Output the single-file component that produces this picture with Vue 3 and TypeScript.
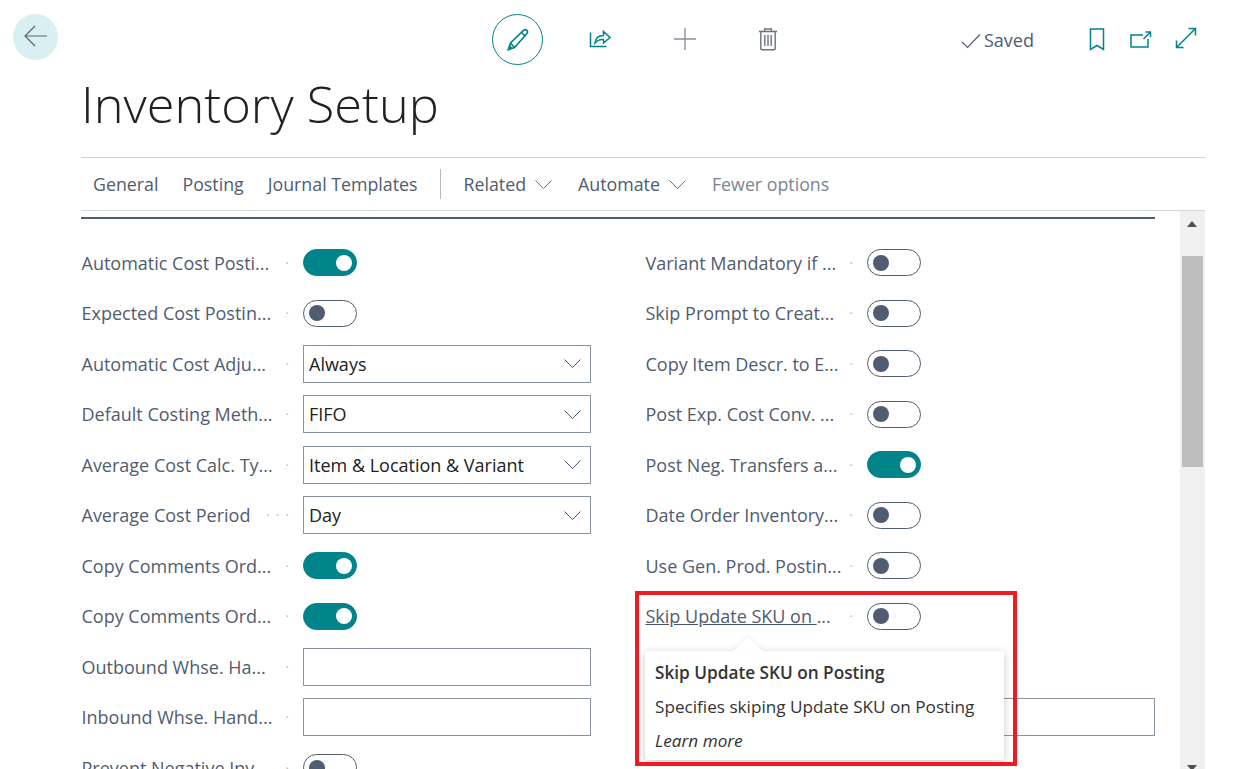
<script setup lang="ts">
type Field = { label: string; kind: 'on' | 'off' | 'select' | 'input' | 'blank'; value?: string; dots?: boolean; link?: boolean }

const left: Field[] = [
  { label: 'Automatic Cost Posti...', kind: 'on' },
  { label: 'Expected Cost Postin...', kind: 'off' },
  { label: 'Automatic Cost Adju...', kind: 'select', value: 'Always' },
  { label: 'Default Costing Meth...', kind: 'select', value: 'FIFO' },
  { label: 'Average Cost Calc. Ty...', kind: 'select', value: 'Item & Location & Variant' },
  { label: 'Average Cost Period', kind: 'select', value: 'Day', dots: true },
  { label: 'Copy Comments Ord...', kind: 'on' },
  { label: 'Copy Comments Ord...', kind: 'on' },
  { label: 'Outbound Whse. Ha...', kind: 'input' },
  { label: 'Inbound Whse. Hand...', kind: 'input' },
  { label: 'Prevent Negative Inv...', kind: 'off' },
]
const right: Field[] = [
  { label: 'Variant Mandatory if ...', kind: 'off' },
  { label: 'Skip Prompt to Creat...', kind: 'off' },
  { label: 'Copy Item Descr. to E...', kind: 'off' },
  { label: 'Post Exp. Cost Conv. ...', kind: 'off' },
  { label: 'Post Neg. Transfers a...', kind: 'on' },
  { label: 'Date Order Inventory...', kind: 'off' },
  { label: 'Use Gen. Prod. Postin...', kind: 'off' },
  { label: 'Skip Update SKU on ...', kind: 'off', link: true },
  { label: '', kind: 'blank' },
  { label: '', kind: 'select', value: '' },
]
const columns = [left, right]
</script>

<template>
  <div class="page">
    <header class="top">
      <button class="back" aria-label="Back">
        <svg width="26" height="22" viewBox="0 0 26 22" fill="none" stroke="#5f6368" stroke-width="1.2"><path d="M24 11H2M12 1 2 11l10 10" /></svg>
      </button>
      <div class="actions">
        <span class="edit">
          <svg width="24" height="24" viewBox="0 0 24 24" fill="none" stroke="#008489" stroke-width="1.6"><path d="M2.500 21.500 4.500 15 17.500 2.400c1-.9 2.400-.9 3.300 0 .9 1 .9 2.300 0 3.300L8.500 19.500zM4.500 15l4 4.500M15.500 4.500l4 4" /><path d="M2.500 21.500 3.500 18l2 2z" fill="#008489" /></svg>
        </span>
        <svg class="share" width="24" height="24" viewBox="0 0 24 24" fill="none" stroke="#008489" stroke-width="1.500"><path d="M2.500 6.500V20.500H18.500M7 17c.4-4.500 3.500-7.500 8.500-7.500V5.500l6.500 6-6.500 5.500v-3.500c-3.500-.2-6.500 1-8.500 3.500z" /></svg>
        <svg class="plus" width="24" height="24" viewBox="0 0 24 24" fill="none" stroke="#8b919c" stroke-width="1.400"><path d="M12 1v22M1 12h22" /></svg>
        <svg class="trash" width="22" height="24" viewBox="0 0 22 24" fill="none" stroke="#6b7280" stroke-width="1.400"><path d="M2 4.500h18M7.500 4.500V2h7v2.500M3.800 4.500v17.300c0 .6.400 1 1 1h12.400c.6 0 1-.4 1-1V4.500M7.800 8v11M11 8v11M14.200 8v11" /></svg>
      </div>
      <div class="saved">
        <svg width="20" height="16" viewBox="0 0 20 16" fill="none" stroke="#505c6f" stroke-width="1.200"><path d="M1 9l5.500 5.500L19 1.500" /></svg>
        <span>Saved</span>
      </div>
      <div class="tools">
        <svg width="16" height="23" viewBox="0 0 16 23" fill="none" stroke="#008489" stroke-width="1.500"><path d="M1.500 1h13v20.500L8 17.500l-6.500 4z" /></svg>
        <svg class="pop" width="22" height="17" viewBox="0 0 22 17" fill="none" stroke="#008489" stroke-width="1.500"><path d="M13 4H1v12h17V8M13.500 8 20 1.500M15.500 1H20.500V6" /></svg>
        <svg class="expand" width="22" height="22" viewBox="0 0 22 22" fill="none" stroke="#008489" stroke-width="1.500"><path d="M1.500 20.500l19-19M13.500 1.500h7v7M1.500 13.500v7h7" /></svg>
      </div>
    </header>

    <h1 class="title">Inventory Setup</h1>

    <nav class="menu">
      <span class="item general">General</span>
      <span class="item posting">Posting</span>
      <span class="item journal">Journal Templates</span>
      <span class="sep"></span>
      <span class="item related">Related
        <svg width="17" height="9" viewBox="0 0 17 9" fill="none" stroke="#6b7280" stroke-width="1"><path d="M.5.500l8 8 8-8" /></svg>
      </span>
      <span class="item automate">Automate
        <svg width="17" height="9" viewBox="0 0 17 9" fill="none" stroke="#6b7280" stroke-width="1"><path d="M.5.500l8 8 8-8" /></svg>
      </span>
      <span class="item fewer">Fewer options</span>
    </nav>

    <section class="panel">
      <div class="content">
        <div class="rule"></div>
        <div class="form">
          <div v-for="(col, c) in columns" :key="c" class="col">
            <div v-for="(f, i) in col" :key="i" class="row">
              <template v-if="f.kind !== 'blank'">
                <span class="label" :class="{ hidden: !f.label }">
                  <template v-if="f.link"><u>Skip Update SKU on </u>...</template>
                  <template v-else>{{ f.label }}</template>
                </span>
                <span class="dots" :class="{ hidden: !f.label, long: f.dots }">{{ f.dots ? '· · ·' : '·' }}</span>
                <span v-if="f.kind === 'on'" class="toggle on"><i></i></span>
                <span v-else-if="f.kind === 'off'" class="toggle"><i></i></span>
                <span v-else-if="f.kind === 'select'" class="box">
                  {{ f.value }}
                  <svg width="17" height="9" viewBox="0 0 17 9" fill="none" stroke="#44546a" stroke-width="1"><path d="M.5.500l8 8 8-8" /></svg>
                </span>
                <span v-else class="box"></span>
              </template>
            </div>
          </div>
        </div>
      </div>
      <div class="scroll">
        <span class="up"></span>
        <span class="thumb"></span>
        <span class="down"></span>
      </div>
    </section>

    <div class="tip">
      <span class="arrow"></span>
      <strong>Skip Update SKU on Posting</strong>
      <p>Specifies skiping Update SKU on Posting</p>
      <em>Learn more</em>
    </div>
    <div class="mark"></div>
  </div>
</template>

<style>
html, body { margin: 0; background: #fff; overflow: hidden; }
</style>

<style scoped>
.page {
  position: relative;
  width: 1243px;
  height: 769px;
  overflow: hidden;
  box-sizing: border-box;
  padding: 14px 38px 0 13px;
  font-family: "Open Sans", "Noto Sans", sans-serif;
  font-size: 18px;
  color: #212121;
}
.top { display: flex; align-items: flex-start; height: 52px; }
.back {
  width: 45px; height: 46px; border: 0; padding: 0 0 2px; border-radius: 50%;
  background: #d9f0f2; display: flex; align-items: center; justify-content: center;
}
.actions { display: flex; align-items: center; margin-left: 434px; height: 51px; }
.edit {
  width: 49px; height: 49px; border: 1px solid #008489; border-radius: 50%;
  display: flex; align-items: center; justify-content: center;
}
.share { margin: -3px 0 0 45px; }
.plus { margin: -2px 0 0 61px; }
.trash { margin: -2px 0 0 60px; }
.saved { display: flex; align-items: center; gap: 3px; margin-left: 182px; height: 51px; color: #505c6f; }
.saved svg { margin-top: 2px; }
.tools { display: flex; align-items: center; height: 51px; margin-left: 55px; }
.tools svg:first-child { margin-top: -1px; }
.pop { margin-left: 25px; margin-top: -1px; }
.expand { margin-left: 23px; margin-top: -3px; }
.title {
  margin: 3px 0 0 68px;
  font-size: 50.500px;
  line-height: 70px;
  font-weight: 300;
  color: #212121;
  border-bottom: 1px solid #d0d3d8;
  height: 70px;
  padding-bottom: 18px;
}
.menu {
  margin-left: 68px;
  height: 52px;
  display: flex;
  align-items: center;
  border-bottom: 1px solid #d8d8dc;
  color: #505c6f;
  font-size: 17.800px;
}
.item { display: flex; align-items: center; white-space: nowrap; }
.general { margin-left: 12px; }
.posting { margin-left: 24px; }
.journal { margin-left: 24px; }
.sep { width: 1px; height: 30px; background: #b5bac2; margin-left: 22px; }
.related { margin-left: 23px; gap: 9px; }
.automate { margin-left: 26px; gap: 9px; }
.fewer { margin-left: 26px; color: #7b8494; }
.panel { margin-left: 68px; height: 558px; display: flex; justify-content: space-between; overflow: hidden; }
.content { width: 1074px; overflow: hidden; }
.rule { height: 2px; margin-top: 6px; background: #505c6f; }
.form { display: grid; grid-template-columns: 510px 510px; column-gap: 54px; padding-top: 18.500px; }
.col { display: grid; grid-auto-rows: 50.500px; }
.row { display: flex; align-items: center; color: #505c6f; }
.label { width: 201px; white-space: nowrap; overflow: hidden; padding-left: .5px; box-sizing: border-box; }
.label u { text-decoration-color: #44546a; }
.dots { width: 24px; margin-left: -3px; padding-right: 14px; box-sizing: border-box; color: #b5bac2; font-size: 13px; text-align: right; white-space: nowrap; }
.dots.long { direction: rtl; word-spacing: 3px; }
.hidden { visibility: hidden; }
.toggle {
  width: 54px; height: 27px; box-sizing: border-box; border: 1px solid #505c6f; border-radius: 14px;
  display: flex; align-items: center; padding-left: 5px;
}
.toggle i { width: 16px; height: 16px; border-radius: 50%; background: #505c6f; }
.toggle.on { background: #008489; border-color: #008489; justify-content: flex-end; padding: 0 4px 0 0; }
.toggle.on i { background: #fff; }
.box {
  flex: 0 0 288px; width: 288px; height: 38px; box-sizing: border-box; border: 1px solid #8a93a0;
  display: flex; align-items: center; justify-content: space-between; padding: 0 9px 0 5px;
  color: #212121;
}
.scroll { position: relative; width: 25px; background: #f0f0f0; }
.thumb { position: absolute; left: 2px; top: 45px; width: 21px; height: 211px; background: #bebebe; }
.up, .down { position: absolute; left: 7px; width: 0; height: 0; border-left: 5.500px solid transparent; border-right: 5.500px solid transparent; }
.up { top: 10px; border-bottom: 6px solid #505050; }
.down { top: 554px; border-top: 6px solid #505050; }
.tip {
  position: absolute; left: 645px; top: 651px; width: 359px; height: 109px; box-sizing: border-box;
  background: #fff; border-radius: 3px; box-shadow: 0 2px 8px rgba(0, 0, 0, .22);
  padding: 10px 10px; color: #212121; display: flex; flex-direction: column;
}
.tip strong { font-size: 17.200px; font-weight: 600; line-height: 24px; color: #333; }
.tip p { margin: 10px 0 0; font-size: 17.150px; line-height: 23px; color: #333; }
.tip em { margin-top: 11px; font-size: 17.200px; line-height: 23px; color: #333; }
.arrow {
  position: absolute; left: 88px; top: -15px; width: 0; height: 0;
  border-left: 15px solid transparent; border-right: 15px solid transparent; border-bottom: 15px solid #fff;
  filter: drop-shadow(0 -1px 1px rgba(0, 0, 0, .08));
}
.mark { position: absolute; left: 635px; top: 591px; width: 382px; height: 175px; box-sizing: border-box; border: 4px solid #ed1c24; }
</style>
